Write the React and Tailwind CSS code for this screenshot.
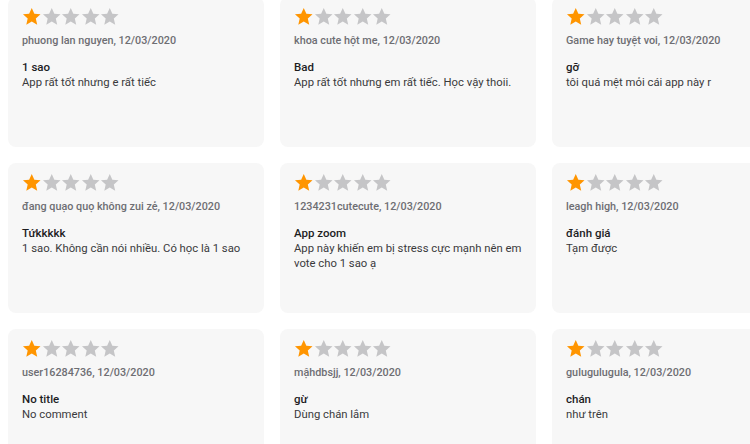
import React from "react";

const reviews = [
  { author: "phuong lan nguyen", title: "1 sao", body: "App rất tốt nhưng e rất tiếc" },
  { author: "khoa cute hột me", title: "Bad", body: "App rất tốt nhưng em rất tiếc. Học vậy thoii." },
  { author: "Game hay tuyệt voi", title: "gỡ", body: "tôi quá mệt mỏi cái app này r" },
  { author: "đang quạo quọ không zui zẻ", title: "Tứkkkkk", body: "1 sao. Không cần nói nhiều. Có học là 1 sao" },
  { author: "1234231cutecute", title: "App zoom", body: "App này khiến em bị stress cực mạnh nên em vote cho 1 sao ạ" },
  { author: "leagh high", title: "đánh giá", body: "Tạm được" },
  { author: "user16284736", title: "No title", body: "No comment" },
  { author: "mậhdbsjj", title: "gừ", body: "Dùng chán lắm" },
  { author: "gulugulugula", title: "chán", body: "như trên" },
];

const Star = ({ filled }) => (
  <svg viewBox="0 0 24 24" className="w-[19.5px] h-[19.5px]">
    <path
      d="M12 1.2l3.2 7.1 7.6.7-5.8 5.1 1.7 7.6L12 17.8l-6.7 3.9 1.7-7.6L1.2 9l7.6-.7z"
      fill={filled ? "#ff9500" : "#c5c5c7"}
    />
  </svg>
);

const ReviewCard = ({ review }) => (
  <div className="bg-[#f7f7f7] rounded-lg h-[150px] px-[14px] pt-[10px]">
    <div className="flex">
      {[0, 1, 2, 3, 4].map((i) => (
        <Star key={i} filled={i === 0} />
      ))}
    </div>
    <p className="mt-[6px] text-[10.8px] leading-[15px] font-medium text-[#6e6e73]">
      {review.author}, 12/03/2020
    </p>
    <p className="mt-[12px] text-[11.5px] leading-[15px] font-medium text-[#1d1d1f]">
      {review.title}
    </p>
    <p className="text-[11.3px] leading-[15px] text-[#3a3a3c]">{review.body}</p>
  </div>
);

export default function App() {
  return (
    <div
      className="w-[750px] h-[444px] overflow-hidden bg-white"
      style={{ fontFamily: "Roboto, 'Noto Sans', sans-serif" }}
    >
      <div className="grid grid-cols-[256px_256px_256px] gap-4 ml-2 -mt-[3px] w-[800px]">
        {reviews.map((r, i) => (
          <ReviewCard key={i} review={r} />
        ))}
      </div>
    </div>
  );
}
